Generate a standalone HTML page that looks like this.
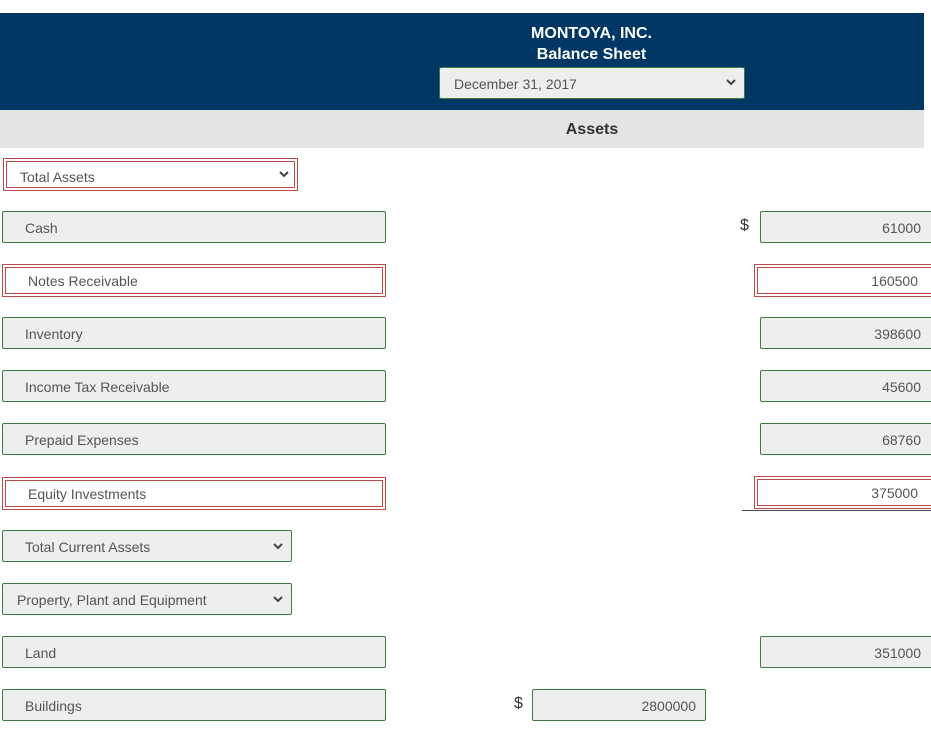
<!DOCTYPE html>
<html><head><style>
body{margin:0;width:931px;height:742px;overflow:hidden;background:#fff;font-family:"Liberation Sans",sans-serif;font-size:14px;color:#555;position:relative}
.a{position:absolute;box-sizing:border-box}
.g{border:1px solid #3d7a3d;background:#eee;border-radius:2px;padding-left:22px;line-height:32px;height:32px}
.r{border:1px solid #b94a48;box-shadow:inset 0 0 0 2px #fff,inset 0 0 0 3px #b94a48;background:#fff;padding-left:25px;line-height:33px;height:33px}
.num{text-align:right;padding-right:9px;padding-left:0}
.sel{padding-left:14px}
.chev{position:absolute;right:8px;top:0;font-size:11px;color:#444}
.d{position:absolute;font-size:16px;color:#333}
</style></head><body>
<div class="a" style="left:0;top:13px;width:924px;height:97px;background:#003764"></div>
<div class="a" style="left:439px;top:23px;width:305px;text-align:center;color:#fff;font-weight:bold;font-size:16px;line-height:21px">MONTOYA, INC.<br>Balance Sheet</div>
<div class="a g sel" style="left:439px;top:67px;width:306px;height:32px;padding-left:14px">December 31, 2017<svg class="chev" style="top:11px" width="10" height="7" viewBox="0 0 10 7"><path d="M1 1l4 4 4-4" stroke="#444" stroke-width="2" fill="none"/></svg></div>
<div class="a" style="left:0;top:110px;width:924px;height:38px;background:#e4e4e4;text-align:center;line-height:40px;font-weight:bold;font-size:16px;color:#333;padding-left:260px">Assets</div>

<div class="a r sel" style="left:3px;top:158px;width:295px;padding-left:16px;line-height:37px">Total Assets<svg class="chev" style="top:12px" width="10" height="7" viewBox="0 0 10 7"><path d="M1 1l4 4 4-4" stroke="#444" stroke-width="2" fill="none"/></svg></div>

<div class="a g" style="left:2px;top:211px;width:384px">Cash</div>
<div class="d" style="left:740px;top:217px">$</div>
<div class="a g num" style="left:760px;top:211px;width:175px;padding-right:13px">61000</div>

<div class="a r" style="left:2px;top:264px;width:384px">Notes Receivable</div>
<div class="a r num" style="left:754px;top:264px;width:181px;padding-right:16px">160500</div>

<div class="a g" style="left:2px;top:317px;width:384px">Inventory</div>
<div class="a g num" style="left:760px;top:317px;width:175px;padding-right:13px">398600</div>

<div class="a g" style="left:2px;top:370px;width:384px">Income Tax Receivable</div>
<div class="a g num" style="left:760px;top:370px;width:175px;padding-right:13px">45600</div>

<div class="a g" style="left:2px;top:423px;width:384px">Prepaid Expenses</div>
<div class="a g num" style="left:760px;top:423px;width:175px;padding-right:13px">68760</div>

<div class="a r" style="left:2px;top:477px;width:384px">Equity Investments</div>
<div class="a r num" style="left:754px;top:476px;width:181px;padding-right:16px">375000</div>
<div class="a" style="left:742px;top:510px;width:189px;height:1px;background:#444"></div>

<div class="a g" style="left:2px;top:530px;width:290px">Total Current Assets<svg class="chev" style="top:12px" width="10" height="7" viewBox="0 0 10 7"><path d="M1 1l4 4 4-4" stroke="#444" stroke-width="2" fill="none"/></svg></div>
<div class="a g sel" style="left:2px;top:583px;width:290px;padding-left:14px">Property, Plant and Equipment<svg class="chev" style="top:12px" width="10" height="7" viewBox="0 0 10 7"><path d="M1 1l4 4 4-4" stroke="#444" stroke-width="2" fill="none"/></svg></div>

<div class="a g" style="left:2px;top:636px;width:384px">Land</div>
<div class="a g num" style="left:760px;top:636px;width:175px;padding-right:13px">351000</div>

<div class="a g" style="left:2px;top:689px;width:384px">Buildings</div>
<div class="d" style="left:514px;top:695px">$</div>
<div class="a g num" style="left:532px;top:689px;width:174px">2800000</div>
</body></html>
